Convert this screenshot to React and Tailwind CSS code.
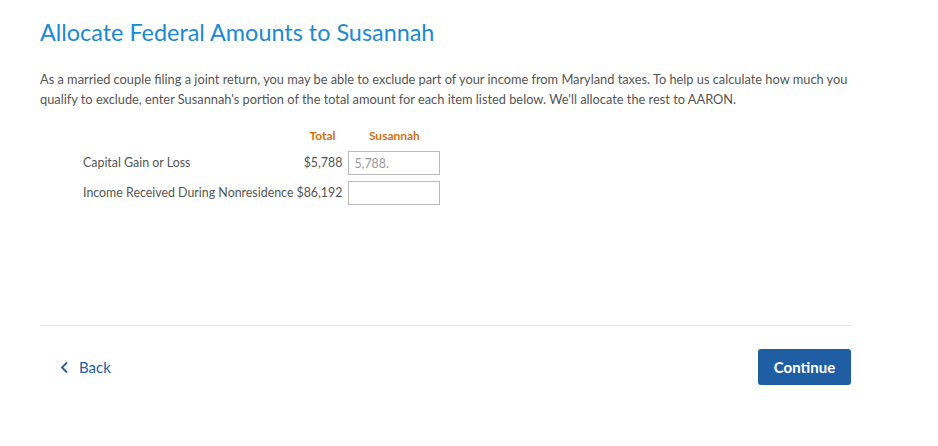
import React, { useState } from 'react';

const rows = [
  { label: 'Capital Gain or Loss', total: '$5,788', placeholder: '5,788.' },
  { label: 'Income Received During Nonresidence', total: '$86,192', placeholder: '' },
];

const App = () => {
  const [values, setValues] = useState(['', '']);

  const handleChange = (i, v) => {
    const next = [...values];
    next[i] = v;
    setValues(next);
  };

  return (
    <div className="w-[938px] h-[446px] bg-white font-['Lato','Open_Sans',sans-serif] text-[#555]">
      <div className="w-[811px] ml-10 pt-[17px]">
        <h1 className="text-[23.4px] leading-[30px] text-[#1a8ad2]">
          Allocate Federal Amounts to Susannah
        </h1>
        <p className="mt-[22px] w-[822px] text-[12.8px] leading-[20px] text-[#555]">
          As a married couple filing a joint return, you may be able to exclude part of your income from Maryland taxes. To help us calculate how much you qualify to exclude, enter Susannah's portion of the total amount for each item listed below. We'll allocate the rest to AARON.
        </p>

        <table className="ml-[43px] mt-[20px] border-separate border-spacing-0 text-[12.4px]">
          <thead>
            <tr>
              <th></th>
              <th className="text-[12px] font-bold text-[#d2700d] text-center pb-[5px] leading-[14px]">Total</th>
              <th className="text-[12px] font-bold text-[#d2700d] text-center pb-[5px] leading-[14px]">Susannah</th>
            </tr>
          </thead>
          <tbody>
            {rows.map((r, i) => (
              <tr key={r.label}>
                <td className="pr-[3px] py-[3px] align-middle whitespace-nowrap">{r.label}</td>
                <td className="pr-[6px] py-[3px] text-right align-middle whitespace-nowrap">{r.total}</td>
                <td className="py-[3px] align-middle">
                  <input
                    value={values[i]}
                    placeholder={r.placeholder}
                    onChange={(e) => handleChange(i, e.target.value)}
                    className="block w-[92px] h-[24px] border border-[#bbb] px-[5px] text-[12.4px] text-[#555] placeholder:text-[#999] outline-none"
                  />
                </td>
              </tr>
            ))}
          </tbody>
        </table>

        <div className="mt-[117px] border-t border-[#e5e5e5]" />

        <div className="mt-[23px] flex items-center justify-between">
          <button className="ml-[20px] flex items-center gap-[10px] text-[15px] text-[#22609f]">
            <svg width="9" height="13" viewBox="0 0 9 13" fill="none">
              <path d="M7 1.5L2 6.5L7 11.5" stroke="#22609f" strokeWidth="1.8" />
            </svg>
            Back
          </button>
          <button className="w-[93px] h-[36px] rounded-[3px] bg-[#1f5ea3] text-white text-[15px] font-bold">
            Continue
          </button>
        </div>
      </div>
    </div>
  );
};

export default App;
